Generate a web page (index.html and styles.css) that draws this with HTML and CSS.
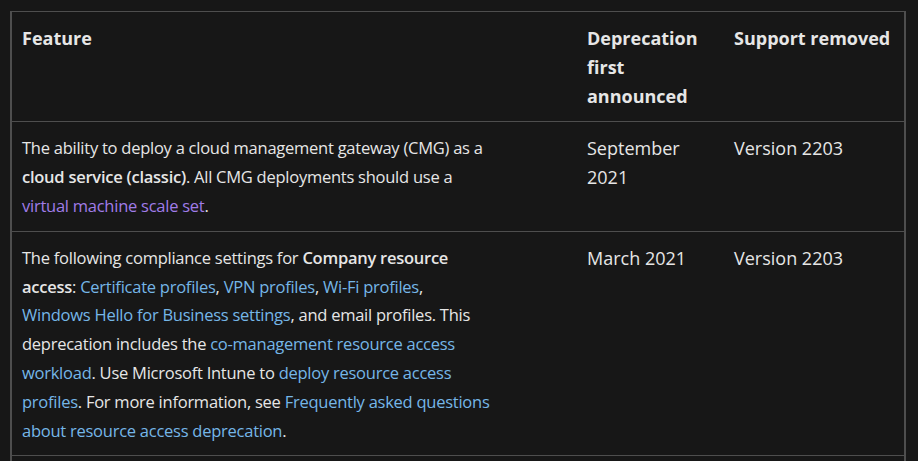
FILE: index.html
```html
<!DOCTYPE html>
<html lang="en">
<head>
<meta charset="utf-8">
<title>Deprecated features</title>
<link rel="stylesheet" href="styles.css">
</head>
<body>
<table class="dep-table">
  <colgroup>
    <col class="col-feature">
    <col class="col-announced">
    <col class="col-removed">
  </colgroup>
  <thead>
    <tr>
      <th class="cell-feature">Feature</th>
      <th>Deprecation first announced</th>
      <th class="nowrap">Support removed</th>
    </tr>
  </thead>
  <tbody>
    <tr>
      <td class="cell-feature">The ability to deploy a cloud management gateway (CMG) as a <strong>cloud service (classic)</strong>. All CMG deployments should use a <a class="visited" href="#">virtual machine scale set</a>.</td>
      <td class="cell-meta">September 2021</td>
      <td class="cell-meta">Version 2203</td>
    </tr>
    <tr>
      <td class="cell-feature">The following compliance settings for <strong>Company resource access</strong>: <a href="#">Certificate profiles</a>, <a href="#">VPN profiles</a>, <a href="#">Wi-Fi profiles</a>, <a href="#">Windows Hello for Business settings</a>, and email profiles. This deprecation includes the <a href="#">co-management resource access workload</a>. Use Microsoft Intune to <a href="#">deploy resource access profiles</a>. For more information, see <a href="#">Frequently asked questions about resource access deprecation</a>.</td>
      <td class="cell-meta">March 2021</td>
      <td class="cell-meta">Version 2203</td>
    </tr>
    <tr class="row-more">
      <td class="cell-feature">&nbsp;</td>
      <td>&nbsp;</td>
      <td>&nbsp;</td>
    </tr>
  </tbody>
</table>
</body>
</html>
```

FILE: styles.css
```css
html, body {
  margin: 0;
  padding: 0;
  background: #171717;
}

body {
  padding: 11px 0 0 10px;
  font-family: "Open Sans", "Noto Sans", sans-serif;
  font-size: 16.5px;
  letter-spacing: -0.25px;
  line-height: 28.8px;
  color: #e6e6e6;
}

.dep-table {
  width: 894px;
  table-layout: fixed;
  border-collapse: collapse;
  border-top: 1px solid #4e4e4e;
  border-left: 2px solid #4e4e4e;
  border-right: 2px solid #4e4e4e;
}

.col-feature { width: 564px; }
.col-announced { width: 147px; }
.col-removed { width: 183px; }

.dep-table th,
.dep-table td {
  text-align: left;
  vertical-align: top;
  padding: 12px 12px 10px 12px;
  border-bottom: 1px solid #4e4e4e;
}

.dep-table th {
  font-size: 18px;
  font-weight: 700;
  letter-spacing: 0;
  padding-bottom: 11px;
}

.dep-table .cell-feature {
  padding-left: 10px;
  padding-right: 80px;
}

.dep-table .cell-meta {
  font-size: 18px;
  letter-spacing: 0;
}

.nowrap {
  white-space: nowrap;
}

.dep-table strong {
  font-weight: 600;
}

.dep-table a {
  color: #75b6e7;
  text-decoration: none;
}

.dep-table a.visited {
  color: #a07ce8;
}

.row-more td {
  height: 40px;
}
```
